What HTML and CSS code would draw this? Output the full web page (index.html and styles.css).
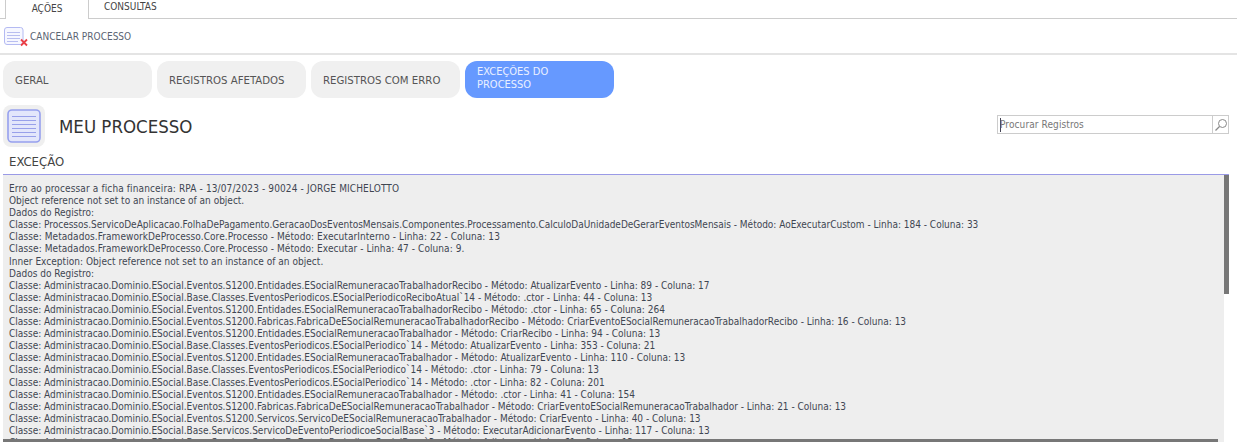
FILE: index.html
```html
<!DOCTYPE html>
<html lang="pt-BR">
<head>
<meta charset="utf-8">
<title>Meu Processo</title>
<link rel="stylesheet" href="styles.css">
</head>
<body>
<nav class="tabs">
  <div class="tab active">AÇÕES</div>
  <div class="tab">CONSULTAS</div>
</nav>
<div class="toolbar">
  <svg class="tool-icon" width="24" height="20" viewBox="0 0 24 20">
    <rect x="0.500" y="0.500" width="18.500" height="17" rx="2.500" fill="#f6f7ff" stroke="#b4baf2"/>
    <path d="M3 5.500h13M3 8.500h13M3 11.500h13M3 14.500h11" stroke="#b9bef0"/>
    <path d="M17 12.500l6 6M23 12.500l-6 6" stroke="#ea3f46" stroke-width="1.800"/>
  </svg>
  <span>CANCELAR PROCESSO</span>
</div>
<div class="steps">
  <div class="step">GERAL</div>
  <div class="step">REGISTROS AFETADOS</div>
  <div class="step">REGISTROS COM ERRO</div>
  <div class="step current">EXCEÇÕES DO PROCESSO</div>
</div>
<header class="head">
  <div class="badge">
    <svg width="34" height="34" viewBox="0 0 34 34">
      <rect x="1" y="1" width="32" height="32" rx="4" fill="#e3e6fb" stroke="#96a0ee" stroke-width="1.600"/>
      <path d="M5 7.500h24M5 11.500h24M5 15.500h24M5 19.500h24M5 23.500h24M5 27.500h24" stroke="#98a0ea"/>
    </svg>
  </div>
  <h1>MEU PROCESSO</h1>
  <div class="search">
    <span class="search-text">Procurar Registros</span>
    <span class="search-btn">
      <svg width="14" height="14" viewBox="0 0 14 14"><circle cx="8.500" cy="5.500" r="4" fill="none" stroke="#888"/><path d="M5.500 8.500L1.500 12.500" stroke="#888" stroke-width="1.300"/></svg>
    </span>
  </div>
</header>
<h2 class="section">EXCEÇÃO</h2>
<div class="panel">
<pre class="log"><span class="wide">Erro ao processar a ficha financeira: RPA - 13/07/2023 - 90024 - JORGE MICHELOTTO</span>
Object reference not set to an instance of an object.
Dados do Registro:
<span class="tight">Classe: Processos.ServicoDeAplicacao.FolhaDePagamento.GeracaoDosEventosMensais.Componentes.Processamento.CalculoDaUnidadeDeGerarEventosMensais - Método: AoExecutarCustom - Linha: 184 - Coluna: 33</span>
<span class="meta">Classe: Metadados.FrameworkDeProcesso.Core.Processo - Método: ExecutarInterno - Linha: 22 - Coluna: 13</span>
<span class="meta">Classe: Metadados.FrameworkDeProcesso.Core.Processo - Método: Executar - Linha: 47 - Coluna: 9.</span>
<span class="inner">Inner Exception: Object reference not set to an instance of an object.</span>
Dados do Registro:
Classe: Administracao.Dominio.ESocial.Eventos.S1200.Entidades.ESocialRemuneracaoTrabalhadorRecibo - Método: AtualizarEvento - Linha: 89 - Coluna: 17
Classe: Administracao.Dominio.ESocial.Base.Classes.EventosPeriodicos.ESocialPeriodicoReciboAtual`14 - Método: .ctor - Linha: 44 - Coluna: 13
Classe: Administracao.Dominio.ESocial.Eventos.S1200.Entidades.ESocialRemuneracaoTrabalhadorRecibo - Método: .ctor - Linha: 65 - Coluna: 264
Classe: Administracao.Dominio.ESocial.Eventos.S1200.Fabricas.FabricaDeESocialRemuneracaoTrabalhadorRecibo - Método: CriarEventoESocialRemuneracaoTrabalhadorRecibo - Linha: 16 - Coluna: 13
Classe: Administracao.Dominio.ESocial.Eventos.S1200.Entidades.ESocialRemuneracaoTrabalhador - Método: CriarRecibo - Linha: 94 - Coluna: 13
Classe: Administracao.Dominio.ESocial.Base.Classes.EventosPeriodicos.ESocialPeriodico`14 - Método: AtualizarEvento - Linha: 353 - Coluna: 21
Classe: Administracao.Dominio.ESocial.Eventos.S1200.Entidades.ESocialRemuneracaoTrabalhador - Método: AtualizarEvento - Linha: 110 - Coluna: 13
Classe: Administracao.Dominio.ESocial.Base.Classes.EventosPeriodicos.ESocialPeriodico`14 - Método: .ctor - Linha: 79 - Coluna: 13
Classe: Administracao.Dominio.ESocial.Base.Classes.EventosPeriodicos.ESocialPeriodico`14 - Método: .ctor - Linha: 82 - Coluna: 201
Classe: Administracao.Dominio.ESocial.Eventos.S1200.Entidades.ESocialRemuneracaoTrabalhador - Método: .ctor - Linha: 41 - Coluna: 154
Classe: Administracao.Dominio.ESocial.Eventos.S1200.Fabricas.FabricaDeESocialRemuneracaoTrabalhador - Método: CriarEventoESocialRemuneracaoTrabalhador - Linha: 21 - Coluna: 13
Classe: Administracao.Dominio.ESocial.Eventos.S1200.Servicos.ServicoDeESocialRemuneracaoTrabalhador - Método: CriarEvento - Linha: 40 - Coluna: 13
Classe: Administracao.Dominio.ESocial.Base.Servicos.ServicoDeEventoPeriodicoeSocialBase`3 - Método: ExecutarAdicionarEvento - Linha: 117 - Coluna: 13
Classe: Administracao.Dominio.ESocial.Base.Servicos.ServicoDeEventoPeriodicoeSocialBase`3 - Método: Adicionar - Linha: 61 - Coluna: 13</pre>
<div class="vbar"></div>
<div class="hbar"></div>
</div>
</body>
</html>
```
FILE: styles.css
```css
* { box-sizing: border-box; }
html, body { margin: 0; height: 442px; overflow: hidden; background: #fff; }
body { font-family: "DejaVu Sans Condensed", "DejaVu Sans", sans-serif; font-size: 10px; color: #444; }
.tabs { display: flex; height: 19px; padding-left: 5px; border-bottom: 1px solid #ccc; }
.tab { height: 18px; padding: 0 15px; line-height: 13px; color: #444; }
.tab.active { width: 84px; height: 19px; padding: 2px 0 0; text-align: center; background: #fff; border: 1px solid #ccc; border-width: 0 1px; }
.toolbar { display: flex; align-items: center; gap: 2px; height: 36px; padding: 1px 0 0 4px; border-bottom: 2px solid #e4e4e4; color: #5a6472; letter-spacing: 0.02px; }
.steps { display: flex; gap: 5px; padding: 6px 0 0 3px; }
.step { width: 149px; height: 37px; padding: 3px 12px 0; display: flex; align-items: center; background: #f0f0f0; border-radius: 12px; font-size: 11.300px; line-height: 14px; color: #555; }
.step.current { padding: 0 12px 3px; background: #6699ff; color: #eaf0ff; font-size: 11px; line-height: 13px; }
.head { display: flex; align-items: center; height: 44px; margin-top: 6px; padding: 0 8px 0 3px; }
.badge { width: 42px; height: 42px; display: flex; align-items: center; justify-content: center; background: #efefef; border-radius: 8px; }
h1 { margin: 0 0 0 14px; font-size: 18.500px; font-weight: 400; color: #333; }
.search { display: flex; align-items: center; align-self: flex-start; width: 232px; height: 19px; margin: 11px 0 0 auto; background: #fff; border: 1px solid #ccc; }
.search-text { flex: 1; margin-left: 2px; border-left: 1px solid #445; text-indent: -1px; letter-spacing: 0.1px; color: #777; line-height: 14px; }
.search-btn { width: 16px; height: 17px; display: flex; align-items: center; justify-content: center; border-left: 1px solid #ccc; }
.section { height: 27px; margin: 0 8px 0 3px; padding: 7px 0 0 6px; font-size: 13px; line-height: 14px; font-weight: 400; color: #444; border-bottom: 1px solid #9a9ae6; }
.panel { position: relative; width: 1226px; height: 267px; margin-left: 3px; overflow: hidden; }
.log { width: 1221px; height: 267px; margin: 0; padding: 8px 0 0 6px; overflow: hidden; background: #eee; font: inherit; line-height: 12.100px; color: #3f4652; white-space: pre; }
.wide { letter-spacing: 0.125px; }
.tight { letter-spacing: -0.010px; }
.meta { letter-spacing: 0.073px; }
.inner { letter-spacing: 0.040px; }
.vbar { position: absolute; top: 0; right: 0; width: 5px; height: 119px; background: #777; }
.hbar { position: absolute; left: 0; bottom: 0; width: 1215px; height: 3px; background: #777; }
```
